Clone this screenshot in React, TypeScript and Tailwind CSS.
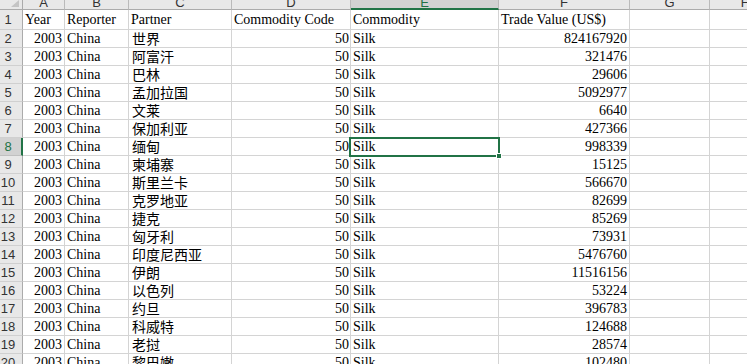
import React from "react";

const rows: [string, string][] = [
  ["世界", "824167920"],
  ["阿富汗", "321476"],
  ["巴林", "29606"],
  ["孟加拉国", "5092977"],
  ["文莱", "6640"],
  ["保加利亚", "427366"],
  ["缅甸", "998339"],
  ["柬埔寨", "15125"],
  ["斯里兰卡", "566670"],
  ["克罗地亚", "82699"],
  ["捷克", "85269"],
  ["匈牙利", "73931"],
  ["印度尼西亚", "5476760"],
  ["伊朗", "11516156"],
  ["以色列", "53224"],
  ["约旦", "396783"],
  ["科威特", "124688"],
  ["老挝", "28574"],
  ["黎巴嫩", "102480"],
];

const serif = { fontFamily: '"Liberation Serif", "Times New Roman", serif' };
const cjk = { fontFamily: '"Noto Sans CJK SC", "Noto Sans", sans-serif' };
const sans = { fontFamily: '"Liberation Sans", Arial, sans-serif' };

const cell =
  "shrink-0 border-r border-b border-[#d4d4d4] flex items-end whitespace-nowrap text-[14px] leading-[16px] text-black";

function RowHead({ n, sel }: { n: number; sel?: boolean }) {
  return (
    <div
      className={
        "shrink-0 w-[23px] flex items-center border-b " +
        (sel
          ? "bg-[#d2d2d2] border-r-2 border-r-[#217346] border-b-[#c0c0c0] text-[#217346]"
          : "bg-[#e8e8e8] border-r border-r-[#ababab] border-b-[#d0d0d0] text-[#333]")
      }
      style={sans}
    >
      <span className="w-[16px] text-center text-[13px] leading-none">{n}</span>
    </div>
  );
}

function ColHead({ w, l, sel }: { w: string; l: string; sel?: boolean }) {
  return (
    <div
      className={
        "shrink-0 h-[10px] overflow-hidden flex items-end justify-center border-r border-r-[#bababa] " +
        w +
        (sel ? " bg-[#d2d2d2] border-b-2 border-b-[#217346] text-[#217346]" : " bg-[#e8e8e8] border-b border-b-[#ababab] text-[#333]")
      }
      style={sans}
    >
      <span className={"text-[13px] leading-[13px] " + (sel ? "mb-[-1px]" : "mb-0")}>{l}</span>
    </div>
  );
}

export default function App() {
  return (
    <div className="w-[747px] h-[364px] overflow-hidden bg-white relative">
      {/* column headers */}
      <div className="flex">
        <div className="shrink-0 w-[23px] h-[10px] bg-[#e8e8e8] border-r border-b border-[#ababab] relative">
          <svg className="absolute left-0 top-0" width="22" height="9" viewBox="0 0 22 9">
            <polygon points="19,0 19,7 11,7" fill="#c4c4c4" />
          </svg>
        </div>
        <ColHead w="w-[42px]" l="A" />
        <ColHead w="w-[64px]" l="B" />
        <ColHead w="w-[103px]" l="C" />
        <ColHead w="w-[119px]" l="D" />
        <ColHead w="w-[148px]" l="E" sel />
        <ColHead w="w-[131px]" l="F" />
        <ColHead w="w-[80px]" l="G" />
        <ColHead w="w-[72px]" l="H" />
        <ColHead w="w-[80px]" l="I" />
      </div>

      {/* header row */}
      <div className="flex h-[20px]">
        <RowHead n={1} />
        <div className={cell + " w-[42px] pl-[2px] pb-[1px]"} style={serif}>Year</div>
        <div className={cell + " w-[64px] pl-[2px] pb-[1px]"} style={serif}>Reporter</div>
        <div className={cell + " w-[103px] pl-[2px] pb-[1px]"} style={serif}>Partner</div>
        <div className={cell + " w-[119px] pl-[2px] pb-[1px]"} style={serif}>Commodity Code</div>
        <div className={cell + " w-[148px] pl-[2px] pb-[1px]"} style={serif}>Commodity</div>
        <div className={cell + " w-[131px] pl-[2px] pb-[1px]"} style={serif}>Trade Value (US$)</div>
        <div className={cell + " w-[80px]"} />
        <div className={cell + " w-[200px]"} />
      </div>

      {rows.map(([partner, value], i) => {
        const n = i + 2;
        const sel = n === 8;
        return (
          <div key={n} className="flex h-[18px]">
            <RowHead n={n} sel={sel} />
            <div className={cell + " w-[42px] justify-end pr-[2px]"} style={serif}>2003</div>
            <div className={cell + " w-[64px] pl-[2px]"} style={serif}>China</div>
            <div className={cell + " w-[103px] pl-[3px]"} style={cjk}>
              <span className="leading-[16px] mb-[1px]">{partner}</span>
            </div>
            <div className={cell + " w-[119px] justify-end pr-[1px]"} style={serif}>50</div>
            <div className={cell + " w-[148px] pl-[2px] relative"} style={serif}>
              Silk
              {sel && (
                <div className="absolute -left-[2px] -top-[1px] -right-[2px] -bottom-[2px] border-2 border-[#217346] z-10">
                  <div className="absolute -right-[4px] -bottom-[4px] w-[6px] h-[6px] bg-[#217346] border border-white" />
                </div>
              )}
            </div>
            <div className={cell + " w-[131px] justify-end pr-[2px]"} style={serif}>{value}</div>
            <div className={cell + " w-[80px]"} />
            <div className={cell + " w-[200px]"} />
          </div>
        );
      })}
    </div>
  );
}
